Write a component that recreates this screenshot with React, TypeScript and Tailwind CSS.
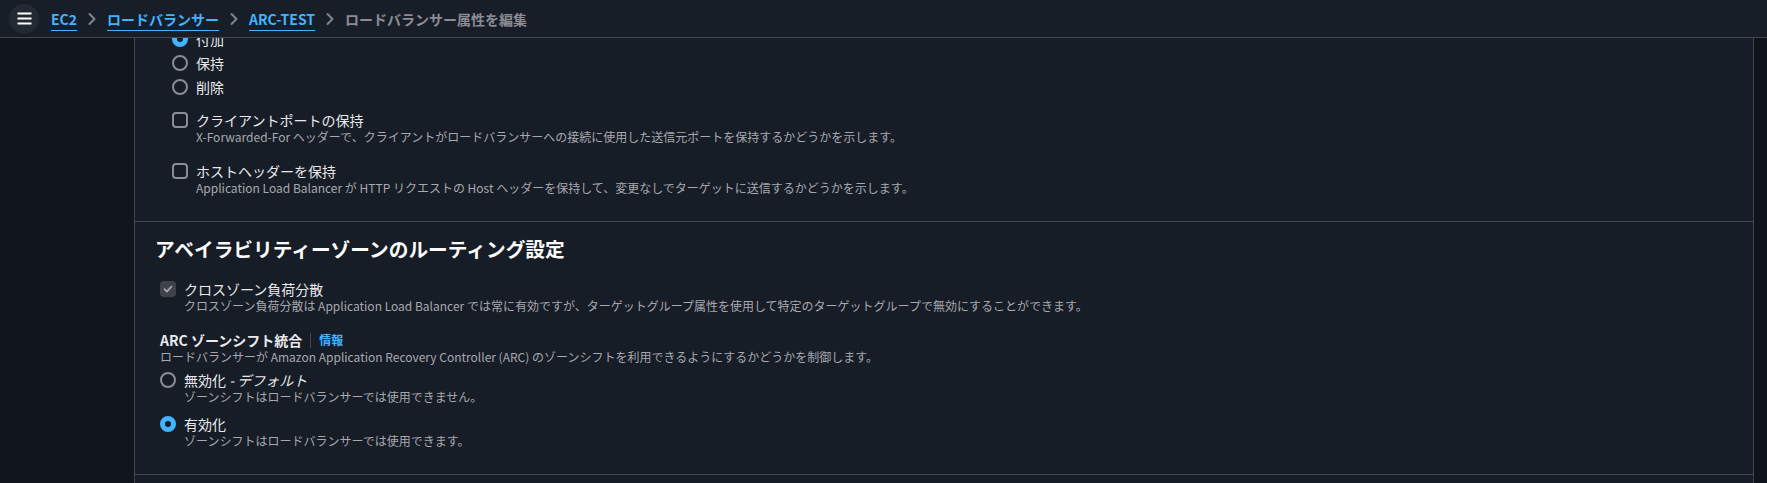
import React from "react";

const Radio = ({ checked }: { checked?: boolean }) =>
  checked ? (
    <span className="block w-4 h-4 rounded-full border-[5px] border-[#42b4ff] bg-[#161d26] shrink-0" />
  ) : (
    <span className="block w-4 h-4 rounded-full border-2 border-[#8c8c94] shrink-0" />
  );

const Box = ({ checked }: { checked?: boolean }) =>
  checked ? (
    <span className="flex items-center justify-center w-4 h-4 rounded-[4px] bg-[#3f424a] shrink-0 mt-[1px]">
      <svg width="12" height="12" viewBox="0 0 12 12" fill="none">
        <path d="M2.5 6.2l2.4 2.4 4.6-5" stroke="#a3a5ac" strokeWidth="1.8" strokeLinecap="round" strokeLinejoin="round" />
      </svg>
    </span>
  ) : (
    <span className="block w-4 h-4 rounded-[4px] border-2 border-[#8c8c94] shrink-0 mt-[1px]" />
  );

const Chevron = () => (
  <span className="mx-[7px] flex items-center">
    <svg width="16" height="16" viewBox="0 0 16 16" fill="none">
      <path d="M5.5 3l5 5-5 5" stroke="#80848c" strokeWidth="2" strokeLinecap="round" strokeLinejoin="round" />
    </svg>
  </span>
);

const Label = ({ children }: { children: React.ReactNode }) => (
  <div className="text-[14px] leading-[18px] text-[#e9e9ed]">{children}</div>
);
const Desc = ({ children }: { children: React.ReactNode }) => (
  <div className="text-[12px] leading-4 text-[#a8a8b0]">{children}</div>
);

export default function App() {
  return (
    <div className="w-[1767px] h-[483px] flex flex-col overflow-hidden font-['Noto_Sans_CJK_JP','Noto_Sans',sans-serif] bg-[#161d26]">
      <header className="h-[38px] shrink-0 border-b border-[#424650] bg-[#171e28] flex items-center">
        <div className="ml-[9px] w-[30px] h-[30px] rounded-full bg-[#222932] flex items-center justify-center">
          <svg width="15" height="13" viewBox="0 0 15 13" fill="none">
            <path d="M0.5 1.5h14M0.5 6.5h14M0.5 11.5h14" stroke="#ffffff" strokeWidth="2" />
          </svg>
        </div>
        <nav className="ml-[12px] flex items-center text-[14px] leading-[18px]">
          <span className="text-[#42b4ff] font-bold underline underline-offset-[5px] decoration-1">EC2</span>
          <Chevron />
          <span className="text-[#42b4ff] font-bold underline underline-offset-[5px] decoration-1">ロードバランサー</span>
          <Chevron />
          <span className="text-[#42b4ff] font-bold underline underline-offset-[5px] decoration-1">ARC-TEST</span>
          <Chevron />
          <span className="text-[#8c8c94] font-bold">ロードバランサー属性を編集</span>
        </nav>
      </header>
      <div className="flex-1 flex min-h-0">
        <aside className="w-[135px] shrink-0 bg-[#11161d] border-r border-[#424650]" />
        <main className="flex-1 bg-[#161d26] border-r border-[#424650] overflow-hidden">
          <div className="-mt-[11px]">
            <section className="border-b border-[#424650] pl-[37px] pb-[25px]">
              <div className="flex flex-col">
                <div className="h-6 flex items-center gap-2 text-[14px] text-[#e9e9ed]">
                  <Radio checked />
                  <span>付加</span>
                </div>
                <div className="h-6 flex items-center gap-2 text-[14px] text-[#e9e9ed]">
                  <Radio />
                  <span>保持</span>
                </div>
                <div className="h-6 flex items-center gap-2 text-[14px] text-[#e9e9ed]">
                  <Radio />
                  <span>削除</span>
                </div>
              </div>
              <div className="mt-3 flex items-start gap-2">
                <Box />
                <div>
                  <Label>クライアントポートの保持</Label>
                  <Desc>X-Forwarded-For ヘッダーで、クライアントがロードバランサーへの接続に使用した送信元ポートを保持するかどうかを示します。</Desc>
                </div>
              </div>
              <div className="mt-[17px] flex items-start gap-2">
                <Box />
                <div>
                  <Label>ホストヘッダーを保持</Label>
                  <Desc>Application Load Balancer が HTTP リクエストの Host ヘッダーを保持して、変更なしでターゲットに送信するかどうかを示します。</Desc>
                </div>
              </div>
            </section>
            <section className="border-b border-[#424650] pl-[20px] pt-[15px] pb-[25px]">
              <h2 className="text-[19.7px] leading-6 font-bold text-[#fbfbfb]">アベイラビリティーゾーンのルーティング設定</h2>
              <div className="pl-[5px]">
                <div className="mt-[19px] flex items-start gap-2">
                  <Box checked />
                  <div>
                    <Label>クロスゾーン負荷分散</Label>
                    <Desc>クロスゾーン負荷分散は Application Load Balancer では常に有効ですが、ターゲットグループ属性を使用して特定のターゲットグループで無効にすることができます。</Desc>
                  </div>
                </div>
                <div className="mt-[17px]">
                  <div className="flex items-center text-[14px] leading-[18px]">
                    <span className="font-bold text-[#e9e9ed]">ARC ゾーンシフト統合</span>
                    <span className="ml-[8px] w-px h-[15px] bg-[#424650]" />
                    <span className="ml-[8px] text-[12px] font-bold text-[#42b4ff]">情報</span>
                  </div>
                  <Desc>ロードバランサーが Amazon Application Recovery Controller (ARC) のゾーンシフトを利用できるようにするかどうかを制御します。</Desc>
                </div>
                <div className="mt-[6px] flex items-start gap-2">
                  <span className="mt-[1px]"><Radio /></span>
                  <div>
                    <Label>無効化 <span className="italic">- デフォルト</span></Label>
                    <Desc>ゾーンシフトはロードバランサーでは使用できません。</Desc>
                  </div>
                </div>
                <div className="mt-[10px] flex items-start gap-2">
                  <span className="mt-[1px]"><Radio checked /></span>
                  <div>
                    <Label>有効化</Label>
                    <Desc>ゾーンシフトはロードバランサーでは使用できます。</Desc>
                  </div>
                </div>
              </div>
            </section>
          </div>
        </main>
        <div className="w-[13px] shrink-0 bg-[#0f141a]" />
      </div>
    </div>
  );
}
